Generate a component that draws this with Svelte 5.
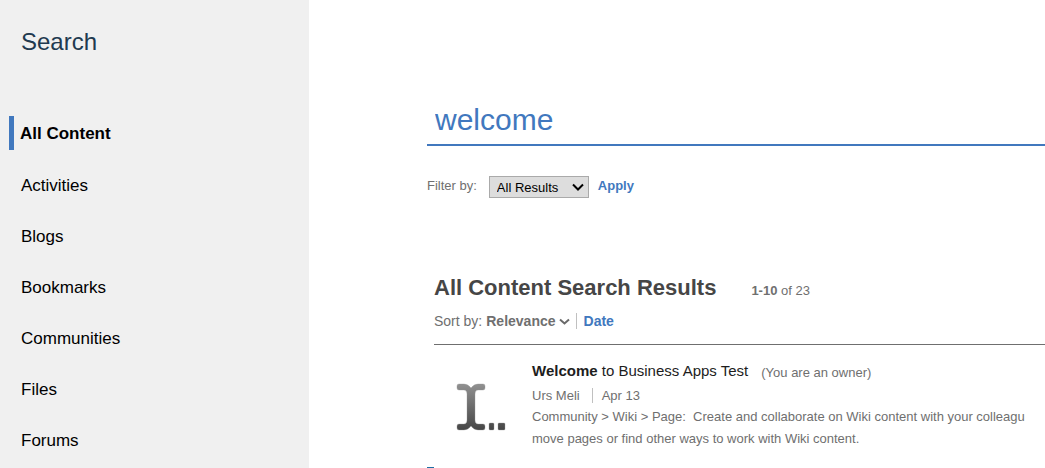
<script>
  const sections = ['Activities', 'Blogs', 'Bookmarks', 'Communities', 'Files', 'Forums'];
  let filter = $state('All Results');
</script>

<div class="page">
  <aside>
    <h1>Search</h1>
    <nav aria-label="Content types">
      <a class="current" href="#all" aria-current="page">All Content</a>
      {#each sections as name}
        <a href={'#' + name.toLowerCase()}>{name}</a>
      {/each}
    </nav>
  </aside>

  <main>
    <input class="query" type="text" aria-label="Search" value="welcome" />

    <form class="filter" onsubmit={(e) => e.preventDefault()}>
      <label for="filter">Filter by:</label>
      <div class="picker">
        <select id="filter" bind:value={filter}>
          <option>All Results</option>
        </select>
        <svg width="12" height="8" viewBox="0 0 12 8" aria-hidden="true">
          <path d="M1 1.5 L6 6.5 L11 1.5" fill="none" stroke="#000" stroke-width="2" />
        </svg>
      </div>
      <button type="submit">Apply</button>
    </form>

    <section class="results">
      <header>
        <h2>All Content Search Results</h2>
        <span class="count"><b>1-10</b> of 23</span>
      </header>

      <div class="sort">
        <span>Sort by:</span>
        <b>Relevance</b>
        <svg width="11" height="8" viewBox="0 0 11 8" aria-hidden="true">
          <path d="M1 2.5 L5.5 6.5 L10 2.5" fill="none" stroke="#6a6a6a" stroke-width="2" />
        </svg>
        <a href="#date">Date</a>
      </div>

      <article>
        <svg class="icon" width="50" height="48" viewBox="0 0 50 48" aria-hidden="true">
          <defs>
            <linearGradient id="shade" x1="0" y1="0" x2="0" y2="48" gradientUnits="userSpaceOnUse">
              <stop offset="0" stop-color="#929292" />
              <stop offset="1" stop-color="#444444" />
            </linearGradient>
          </defs>
          <g fill="url(#shade)" stroke="#999" stroke-opacity="0.35">
            <path d="M3 1 H8 Q12 1 15 5 Q18 1 22 1 H27 Q29 1 29 3 V5 Q29 7 27 7 H22 Q19 7 19 11 V37 Q19 41 22 41 H27 Q29 41 29 43 V45 Q29 47 27 47 H22 Q18 47 15 43 Q12 47 8 47 H3 Q1 47 1 45 V43 Q1 41 3 41 H8 Q11 41 11 37 V11 Q11 7 8 7 H3 Q1 7 1 5 V3 Q1 1 3 1 Z" />
            <rect x="33" y="40" width="5" height="7" rx="1" />
            <rect x="42" y="40" width="7" height="7" rx="1" />
          </g>
        </svg>
        <div class="body">
          <div class="title">
            <a href="#result"><b>Welcome</b> to Business Apps Test</a>
            <span class="role">(You are an owner)</span>
          </div>
          <div class="meta"><span>Urs Meli</span><span>Apr 13</span></div>
          <p>Community &gt; Wiki &gt; Page:&nbsp; Create and collaborate on Wiki content with your colleagu<br />move pages or find other ways to work with Wiki content.</p>
        </div>
      </article>
    </section>
    <div class="marker"></div>
  </main>
</div>

<style>
  :global(body) {
    background: #fff;
    font-family: "Liberation Sans", Arial, sans-serif;
    overflow-x: hidden;
  }
  .page {
    display: flex;
    min-height: 100vh;
  }
  aside {
    box-sizing: border-box;
    flex: 0 0 309px;
    padding: 28px 9px 0;
    background: #f0f0f0;
  }
  h1 {
    margin: 0 12px 60px;
    font-size: 24px;
    line-height: 28px;
    font-weight: 400;
    color: #21394f;
  }
  nav {
    display: flex;
    flex-direction: column;
    gap: 17px;
  }
  nav a {
    padding: 2px 0 0 12px;
    font-size: 17px;
    line-height: 32px;
    color: #000;
    text-decoration: none;
  }
  nav .current {
    margin-bottom: 1px;
    padding-left: 6px;
    border-left: 5px solid #4178be;
    font-weight: 700;
  }
  main {
    flex: 1;
    min-width: 0;
    padding: 96px 0 0 118px;
    overflow: hidden;
    font-size: 13px;
    color: #6f6f6f;
  }
  .query {
    box-sizing: border-box;
    display: block;
    width: 100%;
    height: 50px;
    padding: 0 8px;
    border: 0;
    border-bottom: 2px solid #4178be;
    background: none;
    font: 30px "Liberation Sans", Arial, sans-serif;
    color: #4178be;
    outline: none;
  }
  .filter {
    display: flex;
    align-items: flex-start;
    margin-top: 30px;
    line-height: 20px;
  }
  .picker {
    display: grid;
    align-items: center;
    margin: 0 9px 0 12px;
  }
  .picker > * {
    grid-area: 1 / 1;
  }
  .picker svg {
    justify-self: end;
    margin-right: 5px;
    pointer-events: none;
  }
  select {
    appearance: none;
    box-sizing: border-box;
    width: 100px;
    height: 22px;
    padding: 0 20px 0 7px;
    border: 1px solid #aaa;
    border-radius: 0;
    background: #ddd;
    font: 13px "Liberation Sans", Arial, sans-serif;
    color: #000;
  }
  button {
    padding: 0;
    border: 0;
    background: none;
    font: bold 13px/20px "Liberation Sans", Arial, sans-serif;
    color: #4178be;
  }
  .results {
    padding-left: 7px;
  }
  header {
    display: flex;
    align-items: baseline;
    gap: 35px;
    margin-top: 76px;
  }
  h2 {
    margin: 0;
    font-size: 22px;
    line-height: 28px;
    color: #464646;
  }
  .sort {
    display: flex;
    align-items: center;
    height: 16px;
    padding: 11px 0 15px;
    border-bottom: 1px solid #6f6f6f;
    font-size: 14px;
  }
  .sort b {
    margin: 0 3px 0 4px;
  }
  .sort a {
    margin-left: 6px;
    padding-left: 7px;
    border-left: 1px solid #c0c0c0;
    font-weight: 700;
    color: #4178be;
    text-decoration: none;
  }
  article {
    display: flex;
    gap: 26px;
    padding: 15px 0 0 22px;
  }
  .icon {
    flex: none;
    margin-top: 23px;
  }
  .body {
    flex: none;
    white-space: nowrap;
  }
  .title {
    display: flex;
    align-items: flex-start;
    gap: 13px;
    line-height: 26px;
  }
  .title a {
    font-size: 15px;
    line-height: 22px;
    color: #1d1d1d;
    text-decoration: none;
  }
  .meta {
    display: flex;
    margin-top: 2px;
    line-height: 15px;
  }
  .meta span + span {
    margin-left: 12px;
    padding-left: 9px;
    border-left: 1px solid #c0c0c0;
  }
  p {
    margin: 3px 0 0;
    line-height: 22px;
  }
  .marker {
    width: 7px;
    height: 1px;
    margin-top: 17px;
    background: #1d6fa5;
  }
</style>
